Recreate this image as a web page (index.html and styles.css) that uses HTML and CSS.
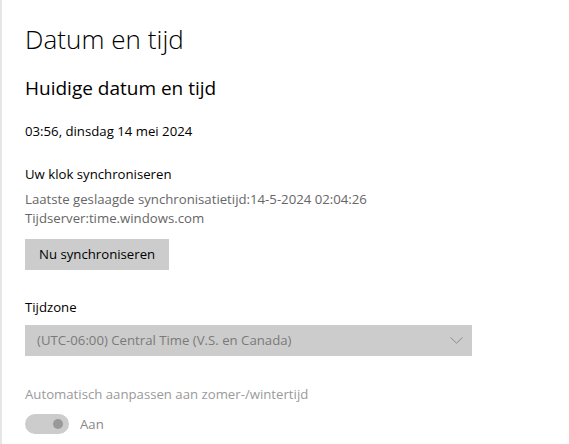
FILE: index.html
```html
<!DOCTYPE html>
<html lang="nl">
<head>
    <meta charset="UTF-8">
    <meta name="viewport" content="width=device-width, initial-scale=1.0">
    <title>Datum en tijd</title>
    <link rel="stylesheet" href="styles.css">
</head>
<body>

    <div class="page">
        <h1>Datum en tijd</h1>
        <h2>Huidige datum en tijd</h2>
        <div class="current">03:56, dinsdag 14 mei 2024</div>

        <div class="label sync-label">Uw klok synchroniseren</div>
        <div class="info">
            <div>Laatste geslaagde synchronisatietijd:14-5-2024 02:04:26</div>
            <div>Tijdserver:time.windows.com</div>
        </div>
        <button class="sync-button">Nu synchroniseren</button>

        <div class="label zone-label">Tijdzone</div>
        <div class="select">
            <span>(UTC-06:00) Central Time (V.S. en Canada)</span>
            <svg class="chevron" width="13" height="7" viewBox="0 0 13 7">
                <path d="M0.5 0.5 L6.5 6.2 L12.5 0.5" fill="none" stroke="#8c8c8c" stroke-width="1"/>
            </svg>
        </div>

        <div class="label dst-label">Automatisch aanpassen aan zomer-/wintertijd</div>
        <div class="toggle-row">
            <div class="toggle"><div class="knob"></div></div>
            <span class="toggle-text">Aan</span>
        </div>
    </div>

</body>
</html>
```
FILE: styles.css
```css
body {
    margin: 0;
    background: #fff;
    color: #000;
    font-family: "Open Sans", "Noto Sans", sans-serif;
    font-size: 13.2px;
    line-height: 20px;
}

.page {
    min-height: 444px;
    border-left: 2px solid #e6e6e6;
    padding: 21px 0 0 23px;
    box-sizing: border-box;
}

h1 {
    margin: 0;
    font-size: 26px;
    font-weight: 300;
    line-height: 36px;
    letter-spacing: 0.05px;
}

h2 {
    margin: 18px 0 0 0;
    font-size: 19px;
    font-weight: 400;
    line-height: 26px;
}

.current {
    margin-top: 20px;
}

.label {
    color: #000;
}

.sync-label {
    margin-top: 23px;
}

.info {
    margin-top: 6px;
    color: #666;
    line-height: 19px;
}

.sync-button {
    display: block;
    margin-top: 11px;
    height: 31px;
    padding: 0 14px;
    min-width: 144px;
    border: none;
    background: #ccc;
    color: #000;
    font-family: inherit;
    font-size: 13.2px;
    line-height: 31px;
}

.zone-label {
    margin-top: 27px;
}

.select {
    margin-top: 8px;
    width: 447px;
    height: 31px;
    background: #ccc;
    color: #7a7a7a;
    display: flex;
    align-items: center;
    justify-content: space-between;
    padding: 0 9px 0 12px;
    box-sizing: border-box;
    line-height: 31px;
}

.chevron {
    display: block;
}

.dst-label {
    margin-top: 28px;
    color: #9a9a9a;
}

.toggle-row {
    margin-top: 10px;
    display: flex;
    align-items: center;
    gap: 11px;
}

.toggle {
    width: 44px;
    height: 20px;
    border-radius: 10px;
    background: #ccc;
    display: flex;
    align-items: center;
    justify-content: flex-end;
    padding-right: 6px;
    box-sizing: border-box;
}

.knob {
    width: 10px;
    height: 10px;
    border-radius: 50%;
    background: #999;
}

.toggle-text {
    color: #888;
}
```
